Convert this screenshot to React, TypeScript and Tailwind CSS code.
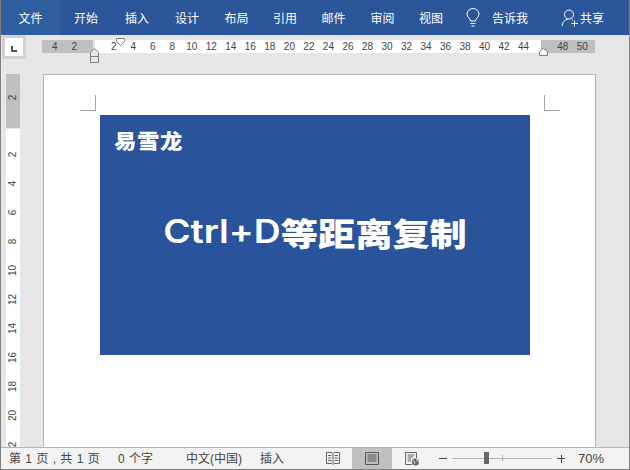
import React from 'react';

const cjk = "font-['Noto_Sans_CJK_SC','Noto_Sans',sans-serif]";

const tabs = [
  { label: '开始', w: 'w-[52px]' },
  { label: '插入', w: 'w-[50px]' },
  { label: '设计', w: 'w-[50px]' },
  { label: '布局', w: 'w-[49px]' },
  { label: '引用', w: 'w-[48px]' },
  { label: '邮件', w: 'w-[49px]' },
  { label: '审阅', w: 'w-[49px]' },
  { label: '视图', w: 'w-[48px]' },
];

const topNumbers = [2, 4, 6, 8, 10, 12, 14, 16, 18, 20, 22, 24, 26, 28, 30, 32, 34, 36, 38, 40, 42, 44];
const sideNumbers = [2, 4, 6, 8, 10, 12, 14, 16, 18, 20, 2];

function Tick(props: Readonly<{ n: number }>) {
  return <span className="w-[19.52px] shrink-0 text-center">{props.n}</span>;
}

function Ruler() {
  return (
    <div className="relative ml-[16px] mt-[5px] flex h-[13px] w-[553px] font-['Liberation_Sans',sans-serif] text-[10px] leading-[13px] text-[#444]">
      <div className="flex w-[51px] shrink-0 bg-[#bfbfbf] pl-[3px]">
        <Tick n={4} />
        <Tick n={2} />
      </div>
      <div className="ml-[2px] flex w-[446px] shrink-0 bg-white pl-[9px]">
        {topNumbers.map((n) => (
          <Tick key={n} n={n} />
        ))}
      </div>
      <div className="flex flex-1 bg-[#bfbfbf] pl-[12px]">
        <Tick n={48} />
        <Tick n={50} />
      </div>
      <svg className="absolute left-[47px] top-[7px]" width="11" height="16" viewBox="0 0 11 16">
        <path d="M1.5 5.5 L5.5 1.5 L9.5 5.5 V15.5 H1.5 Z M1.5 9.5 H9.5" fill="#e6e6e6" stroke="#808080" />
      </svg>
      <svg className="absolute left-[73px] top-[-3px]" width="11" height="10" viewBox="0 0 11 10">
        <path d="M1.5 1.5 H9.5 V4.5 L5.5 8.5 L1.5 4.5 Z" fill="#fff" stroke="#808080" />
      </svg>
      <svg className="absolute left-[496px] top-[7px]" width="11" height="9" viewBox="0 0 11 9">
        <path d="M1.5 4.5 L5.5 1.5 L9.5 4.5 V8.5 H1.5 Z" fill="#fff" stroke="#808080" />
      </svg>
    </div>
  );
}

function SideRuler() {
  return (
    <div className="ml-[5px] flex h-full w-[14px] shrink-0 flex-col overflow-hidden font-['Liberation_Sans',sans-serif] text-[10px] text-[#444]">
      <div className="flex h-[54px] shrink-0 items-center justify-center bg-[#bfbfbf] pb-[8px]">
        <span className="-rotate-90">2</span>
      </div>
      <div className="mt-[1px] flex-1 bg-white pt-[11px]">
        {sideNumbers.map((n, i) => (
          <div key={i} className="flex h-[29px] items-center justify-center">
            <span className="-rotate-90">{n}</span>
          </div>
        ))}
      </div>
    </div>
  );
}

function CropMark(props: Readonly<{ className: string }>) {
  return <div className={'absolute h-[16px] w-[16px] border-[#a6a6a6] ' + props.className} />;
}

export default function App() {
  return (
    <div className={`flex h-[470px] w-[630px] flex-col overflow-hidden border-x border-b border-[#808080] bg-[#e6e6e6] ${cjk}`}>
      <header className="flex h-[35px] shrink-0 items-center bg-[#2b579a] text-[12px] text-white">
        <div className="flex h-full w-[59px] items-center justify-center bg-[#2f5f9f]">文件</div>
        {tabs.map((t) => (
          <div key={t.label} className={'text-center ' + t.w}>
            {t.label}
          </div>
        ))}
        <svg className="ml-[11px]" width="14" height="19" viewBox="0 0 14 19" fill="none" stroke="#fff" strokeWidth="1">
          <path d="M4.5 13 C4.5 10.5 1 9.5 1 6 A6 5.5 0 0 1 13 6 C13 9.5 9.5 10.5 9.5 13 Z M4.5 15.5 H9.5 M5.5 18 H8.5" />
        </svg>
        <span className="ml-[12px]">告诉我</span>
        <svg className="ml-[33px]" width="18" height="18" viewBox="0 0 18 18" fill="none" stroke="#fff" strokeWidth="1">
          <circle cx="8" cy="5.5" r="4.5" />
          <path d="M1 17 C1.5 13 4 10.5 7 10 M11 10.5 L12 11 M13.5 11.5 V17.5 M10.5 14.5 H17" />
        </svg>
        <span className="ml-[1px]">共享</span>
      </header>

      <div className="flex h-[39px] shrink-0">
        <div className="ml-[1px] flex h-[24px] w-[24px] shrink-0 items-center justify-center border-[3px] border-[#d6d0d2] bg-white">
          <div className="mt-[3px] h-[6px] w-[6px] border-b-2 border-l-2 border-[#555]" />
        </div>
        <Ruler />
      </div>

      <div className="flex min-h-0 flex-1">
        <SideRuler />
        <main className="relative ml-[23px] h-full w-[553px] shrink-0 border-x border-t border-[#b4b4b4] bg-white pl-[56px] pt-[40px]">
          <CropMark className="left-[36px] top-[20px] border-b border-r" />
          <CropMark className="left-[500px] top-[20px] border-b border-l" />
          <section className="flex h-[240px] w-[430px] flex-col bg-[#29549c] text-white">
            <div className="ml-[14px] mt-[14px] w-max origin-left scale-x-[1.12] text-[20px] font-black leading-[24px] tracking-[0.5px]">易雪龙</div>
            <div className="mt-[57px] flex scale-x-[1.163] items-center justify-center text-[32px] font-black leading-[44px]">
              <span className="font-['Inter',sans-serif] font-semibold">Ctrl+D</span>
              <span>等距离复制</span>
            </div>
          </section>
        </main>
      </div>

      <footer className="flex h-[22px] shrink-0 items-center border-t border-[#b4b4b4] bg-[#f3f3f3] font-['Liberation_Sans','Noto_Sans_CJK_SC',sans-serif] text-[12px] text-[#444] [word-spacing:1px]">
        <span className="ml-[8px] w-[109px]">第 1 页 , 共 1 页</span>
        <span className="w-[68px]">0 个字</span>
        <span className="w-[74px]">中文(中国)</span>
        <span className="w-[66px]">插入</span>
        <svg width="14" height="13" viewBox="0 0 14 13" fill="none" stroke="#666">
          <path d="M.5 .5 H6 L7 1.5 L8 .5 H13.5 V11.5 H8 L7 12.5 L6 11.5 H.5 Z M7 1.5 V11.5 M2 3.5 H5.5 M2 6 H5.5 M2 8.5 H5.5 M8.5 3.5 H12 M8.5 6 H12 M8.5 8.5 H12" />
        </svg>
        <div className="ml-[12px] flex h-full w-[40px] items-center justify-center bg-[#c0c0c0]">
          <svg width="14" height="13" viewBox="0 0 14 13" fill="none" stroke="#555">
            <path d="M.5 .5 H13.5 V12.5 H.5 Z M2.5 3 H11.5 M2.5 5 H11.5 M2.5 7 H11.5 M2.5 9 H11.5" />
          </svg>
        </div>
        <svg className="ml-[13px]" width="15" height="14" viewBox="0 0 15 14" fill="none" stroke="#666">
          <path d="M7 12.5 H.5 V.5 H11.5 V6 M2.5 3 H9.5 M2.5 5 H8.5 M2.5 7 H6 M2.5 9 H6" />
          <circle cx="10.5" cy="10" r="3.5" fill="#666" stroke="none" />
          <path d="M8 8.5 L10 10 L9.5 12 M11.5 7 L12 9 L14 9.5" stroke="#f3f3f3" strokeWidth="0.8" />
        </svg>
        <div className="ml-[19px] h-[1px] w-[8px] bg-[#444]" />
        <div className="relative ml-[5px] h-[1px] w-[100px] bg-[#b0b0b0]">
          <div className="absolute left-[32px] top-[-6px] h-[12px] w-[5px] bg-[#666]" />
          <div className="absolute left-[50px] top-[-3px] h-[6px] w-[1px] bg-[#b0b0b0]" />
        </div>
        <div className="relative ml-[5px] h-[8px] w-[8px]">
          <div className="absolute left-0 top-[3.5px] h-[1px] w-[8px] bg-[#444]" />
          <div className="absolute left-[3.5px] top-0 h-[8px] w-[1px] bg-[#444]" />
        </div>
        <span className="ml-[13px] text-[13px]">70%</span>
      </footer>
    </div>
  );
}
